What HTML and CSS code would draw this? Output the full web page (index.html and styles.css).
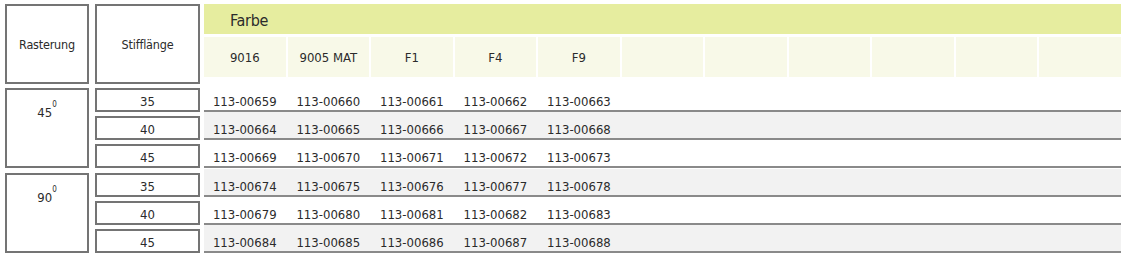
FILE: index.html
```html
<!DOCTYPE html>
<html lang="de">
<head>
<meta charset="utf-8">
<title>Rasterung / Stifflänge</title>
<link rel="stylesheet" href="styles.css">
</head>
<body>
<div class="sheet">
  <div class="head">
    <div class="box raster-h label">Rasterung</div>
    <div class="box stift-h label">Stifflänge</div>
    <div class="colors">
      <div class="farbe">Farbe</div>
      <div class="codes">
        <div class="code">9016</div>
        <div class="code">9005 MAT</div>
        <div class="code">F1</div>
        <div class="code">F4</div>
        <div class="code">F9</div>
        <div class="code"></div>
        <div class="code"></div>
        <div class="code"></div>
        <div class="code"></div>
        <div class="code"></div>
        <div class="code"></div>
      </div>
    </div>
  </div>

  <div class="group">
    <div class="box raster">45<sup>0</sup></div>
    <div class="stifts">
      <div class="box stift">35</div>
      <div class="box stift">40</div>
      <div class="box stift">45</div>
    </div>
    <div class="rows">
      <div class="row"><span>113-00659</span><span>113-00660</span><span>113-00661</span><span>113-00662</span><span>113-00663</span></div>
      <div class="row alt"><span>113-00664</span><span>113-00665</span><span>113-00666</span><span>113-00667</span><span>113-00668</span></div>
      <div class="row"><span>113-00669</span><span>113-00670</span><span>113-00671</span><span>113-00672</span><span>113-00673</span></div>
    </div>
  </div>

  <div class="group">
    <div class="box raster">90<sup>0</sup></div>
    <div class="stifts">
      <div class="box stift">35</div>
      <div class="box stift">40</div>
      <div class="box stift">45</div>
    </div>
    <div class="rows">
      <div class="row alt"><span>113-00674</span><span>113-00675</span><span>113-00676</span><span>113-00677</span><span>113-00678</span></div>
      <div class="row"><span>113-00679</span><span>113-00680</span><span>113-00681</span><span>113-00682</span><span>113-00683</span></div>
      <div class="row alt"><span>113-00684</span><span>113-00685</span><span>113-00686</span><span>113-00687</span><span>113-00688</span></div>
    </div>
  </div>
</div>
</body>
</html>
```

FILE: styles.css
```css
html, body {
  margin: 0;
  padding: 0;
  background: #ffffff;
}

body {
  font-family: "DejaVu Sans Condensed", "DejaVu Sans", sans-serif;
  font-stretch: condensed;
  font-size: 13px;
  color: #2b2b2b;
}

.sheet {
  padding: 4px 0 0 5px;
  width: 1116px;
}

.label {
  font-size: 12.5px;
  letter-spacing: -0.2px;
}

.head {
  display: flex;
  height: 80px;
}

.box {
  box-sizing: border-box;
  border: 2px solid #747474;
  background: #ffffff;
  display: flex;
  align-items: center;
  justify-content: center;
}

.raster-h,
.raster {
  width: 84px;
  margin-right: 6px;
  flex: none;
}

.stift-h,
.stifts {
  width: 105px;
  margin-right: 4px;
  flex: none;
}

.colors {
  flex: 1;
  display: flex;
  flex-direction: column;
}

.farbe {
  box-sizing: border-box;
  height: 30px;
  background: #e6ed9f;
  padding: 3px 0 0 26px;
  font-size: 16px;
  letter-spacing: -0.3px;
  line-height: 27px;
}

.codes {
  margin-top: 3px;
  height: 40px;
  display: grid;
  grid-template-columns: repeat(11, 1fr);
  column-gap: 2px;
}

.code {
  background: #f8f9e8;
  display: flex;
  align-items: center;
  justify-content: center;
}

.group {
  display: flex;
  margin-top: 4px;
}

.group + .group {
  margin-top: 5px;
}

.raster {
  height: 80px;
  align-items: flex-start;
  padding-top: 15px;
  line-height: 16px;
}

.raster sup {
  font-size: 8px;
  line-height: 0;
  vertical-align: 2.5px;
  margin-left: 0;
}

.stifts {
  display: flex;
  flex-direction: column;
  gap: 4px;
}

.stift {
  height: 24px;
  padding-top: 2px;
}

.rows {
  flex: 1;
  margin-top: -4px;
  display: flex;
  flex-direction: column;
}

.row {
  box-sizing: border-box;
  height: 28px;
  padding-top: 8px;
  border-bottom: 2px solid #8a8a8a;
  display: grid;
  grid-template-columns: repeat(11, 1fr);
  column-gap: 2px;
  align-items: center;
}

.row span {
  text-align: center;
}

.row.alt {
  background: #f2f2f2;
}
```
